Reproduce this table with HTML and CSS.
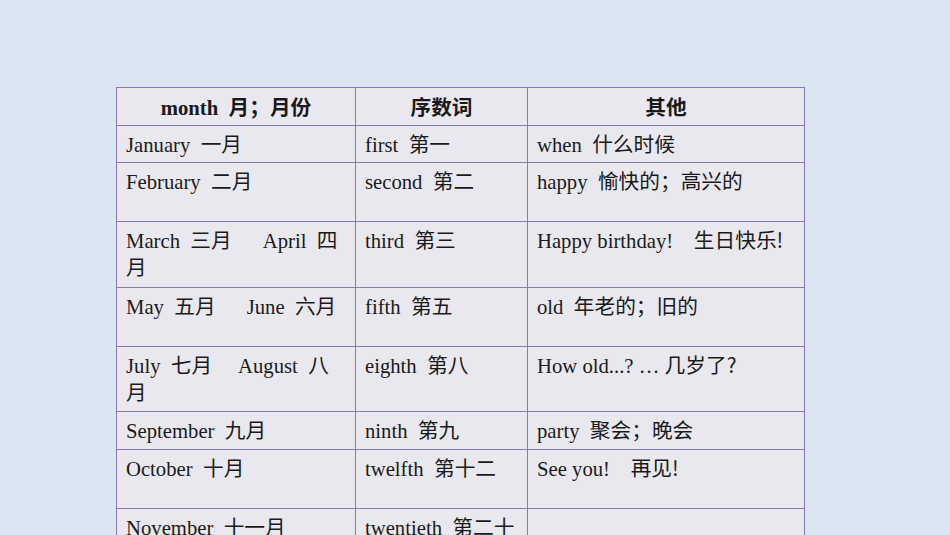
FILE: index.html
```html
<!DOCTYPE html>
<html lang="zh">
<head>
<meta charset="utf-8">
<link rel="stylesheet" href="styles.css">
</head>
<body>
<table class="vocab">
  <colgroup>
    <col class="c1"><col class="c2"><col class="c3">
  </colgroup>
  <thead>
    <tr class="r-head"><th>month  月；月份</th><th>序数词</th><th>其他</th></tr>
  </thead>
  <tbody>
    <tr class="r1"><td>January  一月</td><td>first  第一</td><td>when  什么时候</td></tr>
    <tr class="r2"><td>February  二月</td><td>second  第二</td><td>happy  愉快的；高兴的</td></tr>
    <tr class="r3"><td>March  三月      April  四月</td><td>third  第三</td><td>Happy birthday!    <span class="cjk">生日快乐!</span></td></tr>
    <tr class="r4"><td>May  五月      June  六月</td><td>fifth  第五</td><td>old  年老的；旧的</td></tr>
    <tr class="r5"><td>July  七月     August  八月</td><td>eighth  第八</td><td>How old...? … <span class="cjk">几岁了?</span></td></tr>
    <tr class="r6"><td>September  九月</td><td>ninth  第九</td><td>party  聚会；晚会</td></tr>
    <tr class="r7"><td>October  十月</td><td>twelfth  第十二</td><td>See you!    <span class="cjk">再见!</span></td></tr>
    <tr class="r8"><td>November  十一月</td><td>twentieth  第二十</td><td></td></tr>
  </tbody>
</table>
</body>
</html>
```
FILE: styles.css
```css
html, body {
  margin: 0;
  padding: 0;
  background: #dce6f2;
  height: 100%;
  overflow: hidden;
}
body {
  padding: 87px 0 0 116px;
  box-sizing: border-box;
}
.vocab {
  border-collapse: collapse;
  table-layout: fixed;
  width: 689px;
  background: #e9e8ef;
  font-family: "Liberation Serif", "Noto Sans CJK SC", serif;
  font-size: 20.7px;
  color: #1a1a1a;
}
.c1 { width: 239px; }
.c2 { width: 172px; }
.c3 { width: 277px; }
.vocab th, .vocab td {
  border: 1.5px solid #8a78b6;
  padding: 6px 9px 0 9px;
  line-height: 27px;
  white-space: pre-wrap;
  vertical-align: top;
  text-align: left;
  box-sizing: border-box;
}
.vocab th {
  font-weight: bold;
  text-align: center;
  vertical-align: middle;
  padding: 3px 6px 0;
}
.cjk {
  font-family: "Noto Sans CJK SC", sans-serif;
  line-height: 1;
}
.r-head { height: 38px; }
.r1 { height: 37px; }
.r2 { height: 59px; }
.r3 { height: 66px; }
.r4 { height: 59px; }
.r5 { height: 65px; }
.r6 { height: 38px; }
.r7 { height: 59px; }
.r8 { height: 60px; }
```
